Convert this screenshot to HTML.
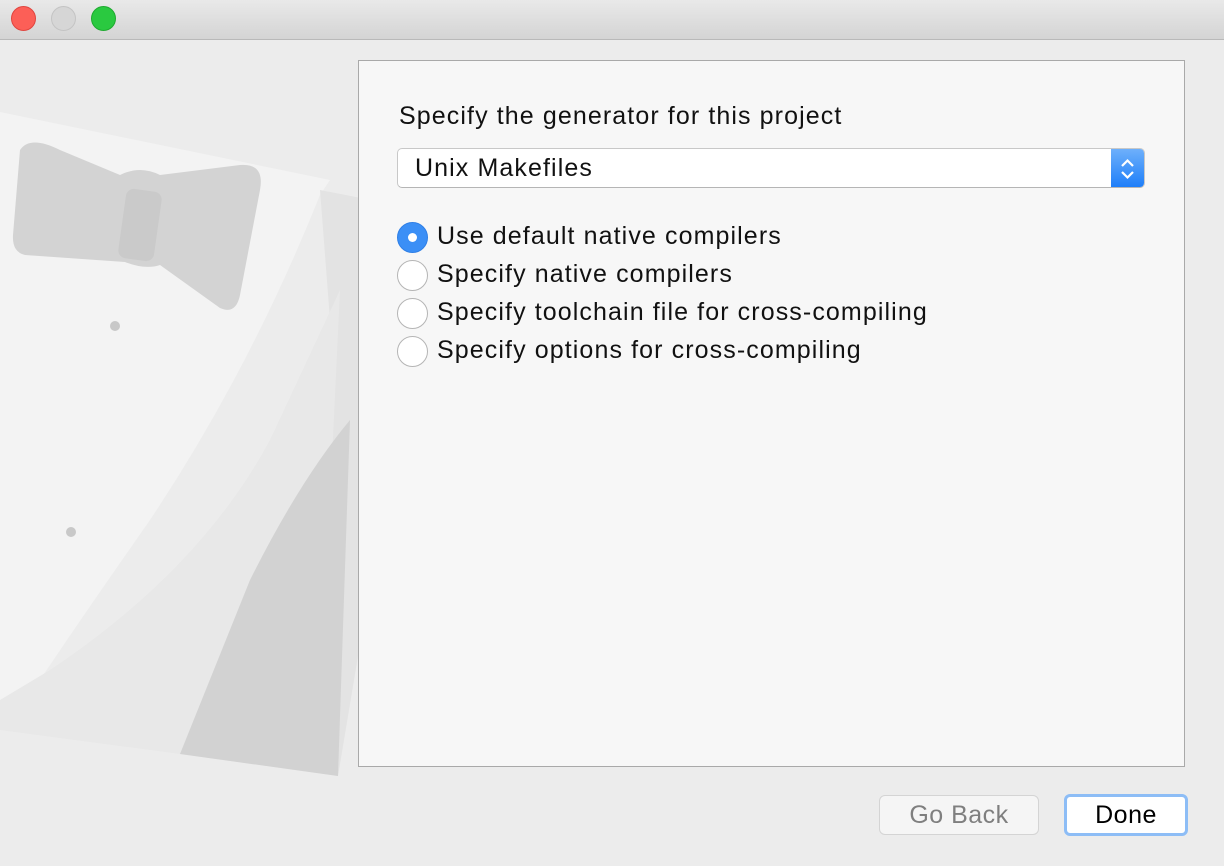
<!DOCTYPE html>
<html><head><meta charset="utf-8"><style>
*{margin:0;padding:0;box-sizing:border-box}
body{width:1224px;height:866px;background:#ececec;font-family:"Liberation Sans",sans-serif;position:relative;overflow:hidden}
.tb{position:absolute;left:0;top:0;width:1224px;height:40px;background:linear-gradient(#e9e9e9,#d4d4d4);border-bottom:1px solid #b9b9b9}
.dot{position:absolute;top:6px;width:25px;height:25px;border-radius:50%}
.panel{position:absolute;left:358px;top:60px;width:827px;height:707px;background:#f7f7f7;border:1px solid #a9a9a9}
.t{position:absolute;font-size:25px;letter-spacing:1.1px;color:#111;white-space:nowrap}
.sel{position:absolute;left:397px;top:148px;width:748px;height:40px;background:#fff;border:1px solid #c8c8c8;border-bottom-color:#b5b5b5;border-radius:5px;overflow:hidden}
.arr{position:absolute;right:0;top:0;width:33px;height:40px;background:linear-gradient(#6eb0fb,#1a7cf9)}
.r{position:absolute;left:397px;width:31px;height:31px;border-radius:50%;background:#fff;border:1px solid #b5b5b5}
.btn{position:absolute;font-size:25px;letter-spacing:0.5px;text-align:center;border-radius:6px}
</style></head><body>
<svg style="position:absolute;left:0;top:40px" width="460" height="780">
<path d="M0 70 L430 162 Q448 166 446 185 L338 738 Q334 754 318 752 L0 690 Z" fill="#ececec"/>
<path d="M0 72 L330 140 L320 155 Q250 330 150 480 Q80 580 40 640 L0 660 Z" fill="#f3f3f3"/>
<path d="M320 150 L432 172 L338 736 L180 714 Q240 560 280 470 Q320 360 330 280 Z" fill="#e3e3e3"/>
<path d="M0 660 L50 630 Q200 530 270 400 L340 250 L330 460 Q290 560 190 700 L180 714 L0 690 Z" fill="#e8e8e8"/>
<path d="M250 540 Q300 440 350 380 L338 736 L180 714 Z" fill="#d2d2d2"/>
<path d="M20 110 Q30 95 60 110 L120 135 Q140 125 160 135 L240 125 Q265 123 260 150 L240 255 Q236 275 220 268 L160 225 Q145 230 125 222 L25 215 Q12 212 13 195 Z" fill="#d3d3d3"/>
<rect x="122" y="150" width="36" height="70" rx="8" fill="#cacaca" transform="rotate(8 140 185)"/>
<circle cx="115" cy="286" r="5" fill="#c8c8c8"/><circle cx="71" cy="492" r="5" fill="#c8c8c8"/>
</svg>
<div class="tb">
<div class="dot" style="left:11px;background:#fc5f57;border:1px solid #e0443e"></div>
<div class="dot" style="left:51px;background:#d6d6d6;border:1px solid #c4c4c4"></div>
<div class="dot" style="left:91px;background:#2ac940;border:1px solid #1eaa2f"></div>
</div>
<div class="panel"></div>
<div class="t" style="left:399px;top:102px">Specify the generator for this project</div>
<div class="sel"><div class="t" style="left:17px;top:5px">Unix Makefiles</div>
<div class="arr"><svg width="33" height="40"><path d="M11 17 L16.5 11.5 L22 17 M11 23 L16.5 28.5 L22 23" stroke="#fff" stroke-width="2.2" fill="none"/></svg></div></div>
<div class="r" style="top:222px;background:#3b8ff6;border-color:#2f7fe6"><div style="position:absolute;left:10px;top:10px;width:9px;height:9px;border-radius:50%;background:#fff"></div></div>
<div class="r" style="top:260px"></div>
<div class="r" style="top:298px"></div>
<div class="r" style="top:336px"></div>
<div class="t" style="left:437px;top:222px">Use default native compilers</div>
<div class="t" style="left:437px;top:260px">Specify native compilers</div>
<div class="t" style="left:437px;top:298px">Specify toolchain file for cross-compiling</div>
<div class="t" style="left:437px;top:336px">Specify options for cross-compiling</div>
<div class="btn" style="left:879px;top:795px;width:160px;height:40px;background:#f5f5f5;border:1px solid #d4d4d4;color:#7f7f7f;line-height:38px">Go Back</div>
<div class="btn" style="left:1064px;top:794px;width:124px;height:42px;background:#fff;border:3px solid #8dbdf6;color:#000;line-height:36px">Done</div>
</body></html>
